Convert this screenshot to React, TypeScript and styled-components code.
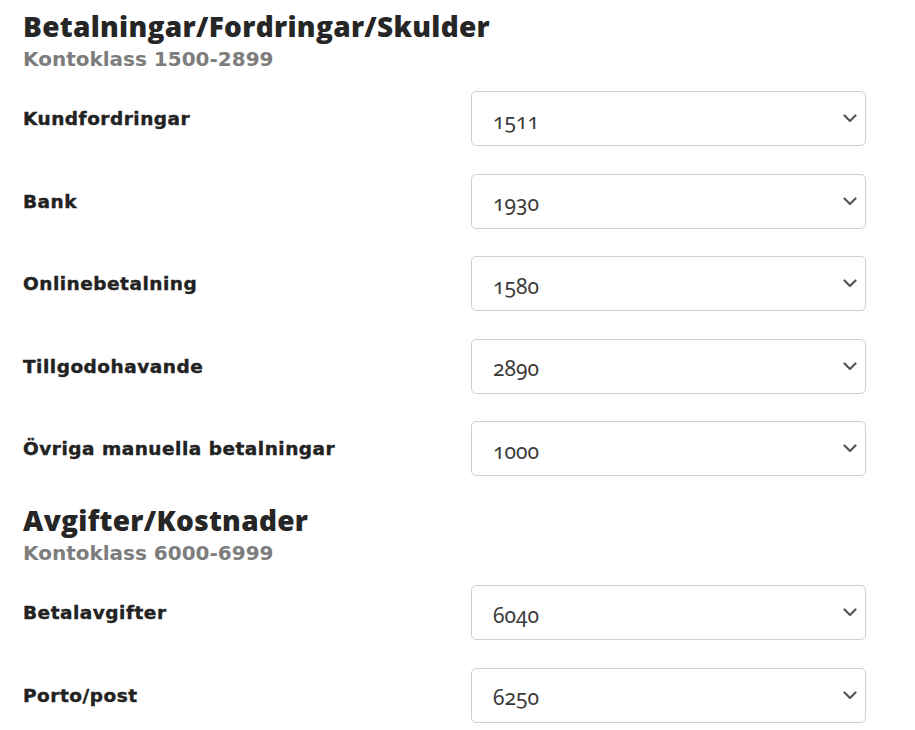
import React from 'react'
import styled, { createGlobalStyle } from 'styled-components'

const GlobalStyle = createGlobalStyle`
  body {
    margin: 0;
    background: #ffffff;
    font-family: 'Open Sans', 'Liberation Sans', sans-serif;
  }
`

type Row = { label: string; value: string }

const sections: { title: string; sub: string; rows: Row[] }[] = [
  {
    title: 'Betalningar/Fordringar/Skulder',
    sub: 'Kontoklass 1500-2899',
    rows: [
      { label: 'Kundfordringar', value: '1511' },
      { label: 'Bank', value: '1930' },
      { label: 'Onlinebetalning', value: '1580' },
      { label: 'Tillgodohavande', value: '2890' },
      { label: 'Övriga manuella betalningar', value: '1000' },
    ],
  },
  {
    title: 'Avgifter/Kostnader',
    sub: 'Kontoklass 6000-6999',
    rows: [
      { label: 'Betalavgifter', value: '6040' },
      { label: 'Porto/post', value: '6250' },
    ],
  },
]

// liten nedåtpil i valrutan
const Chevron = () => (
  <svg width='14' height='9' viewBox='0 0 14 9' fill='none'>
    <path d='M1.5 1.5 L7 7 L12.5 1.5' stroke='#555' strokeWidth='2.2' strokeLinecap='round' strokeLinejoin='round' />
  </svg>
)

const App: React.FC = () => {
  return (
    <>
      <GlobalStyle />
      <Page>
        {sections.map((s) => (
          <Section key={s.title}>
            <Title>{s.title}</Title>
            <Sub>{s.sub}</Sub>
            <Rows>
              {s.rows.map((r) => (
                <FieldRow key={r.label}>
                  <Label>{r.label}</Label>
                  <SelectBox>
                    <Value>{r.value}</Value>
                    <Chevron />
                  </SelectBox>
                </FieldRow>
              ))}
            </Rows>
          </Section>
        ))}
      </Page>
    </>
  )
}

const Page = styled.div`
  padding: 7px 0 0 23px;
  display: flex;
  flex-direction: column;
  gap: 25px;
`

const Section = styled.section`
  display: flex;
  flex-direction: column;
`

const Title = styled.h2`
  margin: 0;
  font-family: 'Open Sans', sans-serif;
  font-weight: 800;
  font-size: 28px;
  line-height: 38px;
  letter-spacing: 0.3px;
  color: #262626;
`

const Sub = styled.div`
  margin-top: 2px;
  font-family: 'DejaVu Sans', sans-serif;
  font-weight: 700;
  font-size: 20px;
  line-height: 24px;
  color: #7d7d7d;
`

const Rows = styled.div`
  margin-top: 20px;
  display: flex;
  flex-direction: column;
  gap: 27.5px;
`

const FieldRow = styled.div`
  display: flex;
  align-items: center;
  height: 55px;
`

const Label = styled.div`
  width: 448px;
  font-family: 'DejaVu Sans', sans-serif;
  font-weight: 700;
  font-size: 18.5px;
  letter-spacing: 0.5px;
  -webkit-text-stroke: 0.4px #222;
  color: #222;
`

const SelectBox = styled.div`
  box-sizing: border-box;
  width: 395px;
  height: 55px;
  border: 1px solid #cfcfcf;
  border-radius: 5px;
  padding: 0 8px 0 21px;
  display: flex;
  align-items: center;
  justify-content: space-between;
`

const Value = styled.span`
  font-family: 'Noto Sans', 'Lato', sans-serif;
  font-variant-numeric: oldstyle-nums;
  font-feature-settings: 'onum' 1;
  font-size: 21px;
  padding-top: 4px;
  color: #3a3a3a;
`

export default App
